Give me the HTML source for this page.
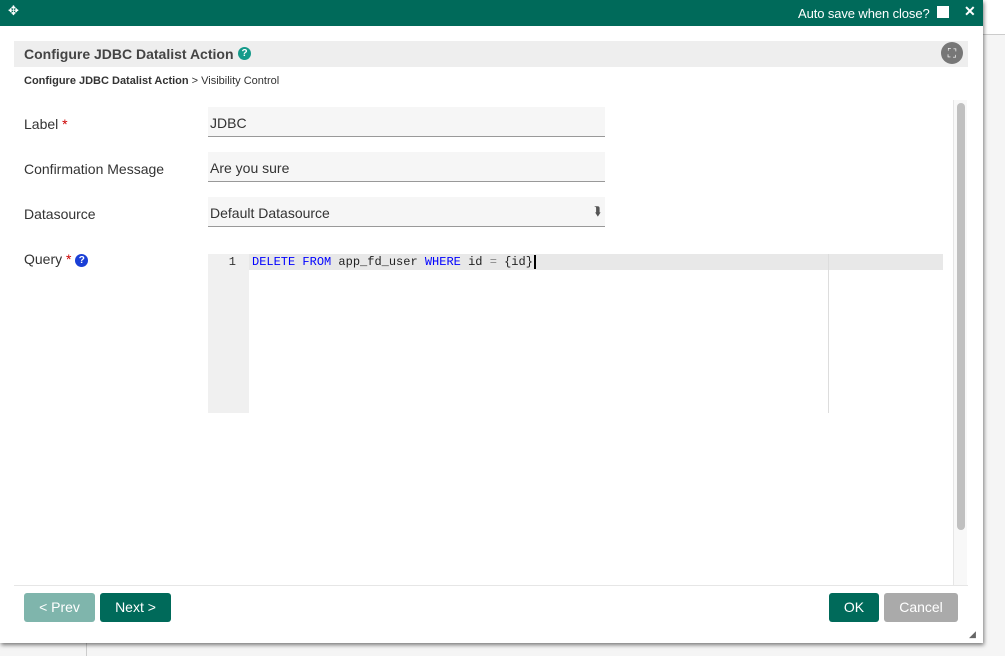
<!DOCTYPE html>
<html><head><style>
*{margin:0;padding:0;box-sizing:border-box}
body{width:1005px;height:656px;background:#f5f5f5;position:relative;overflow:hidden;font-family:"Liberation Sans",sans-serif;}
.abs{position:absolute}
.lbl{position:absolute;left:24px;font-size:14px;color:#333}
.inp{position:absolute;left:208px;width:397px;height:30px;background:#f6f6f6;border-bottom:1px solid #999;font-size:14px;color:#333;padding:8px 2px}
.btn{position:absolute;top:593px;height:29px;border-radius:3px;color:#fff;font-size:14px;text-align:center;line-height:29px}
</style></head><body>
<div class="abs" style="left:983px;top:0;width:22px;height:35px;background:#fff;border-bottom:1px solid #ccc"></div>
<div class="abs" style="left:86px;top:604px;width:1px;height:52px;background:#ccc"></div>
<div class="abs" style="left:0;top:0;width:983px;height:643px;background:#fff;box-shadow:1px 2px 4px rgba(0,0,0,.5)"></div>
<div class="abs" style="left:0;top:0;width:983px;height:26px;background:#006a5a"></div>
<div class="abs" style="left:8px;top:3px;color:#fff;font-size:13px">✥</div>
<div class="abs" style="left:798px;top:6px;color:#fff;font-size:13px;letter-spacing:-0.1px">Auto save when close?</div>
<div class="abs" style="left:937px;top:6px;width:12px;height:12px;background:#fff"></div>
<div class="abs" style="left:964px;top:3px;color:#fff;font-size:14px;font-weight:bold">✕</div>
<div class="abs" style="left:14px;top:41px;width:954px;height:26px;background:#eee"></div>
<div class="abs" style="left:24px;top:46px;font-size:14px;font-weight:bold;color:#444">Configure JDBC Datalist Action</div>
<div class="abs" style="left:238px;top:47px;width:13px;height:13px;border-radius:50%;background:#159a8a;color:#fff;font-size:10px;font-weight:bold;text-align:center;line-height:13px">?</div>
<div class="abs" style="left:941px;top:42px;width:22px;height:22px;border-radius:50%;background:#777;color:#fff;font-size:12px;text-align:center;line-height:22px">⛶</div>
<div class="abs" style="left:24px;top:75px;font-size:11px;color:#333"><b>Configure JDBC Datalist Action</b> &gt; Visibility Control</div>
<div class="lbl" style="top:116px">Label <span style="color:#c00">*</span></div>
<div class="lbl" style="top:161px">Confirmation Message</div>
<div class="lbl" style="top:206px">Datasource</div>
<div class="lbl" style="top:251px">Query <span style="color:#c00">*</span> <span style="display:inline-block;width:13px;height:13px;border-radius:50%;background:#1a3fd6;color:#fff;font-size:10px;font-weight:bold;text-align:center;line-height:13px;vertical-align:1px">?</span></div>
<div class="inp" style="top:107px">JDBC</div>
<div class="inp" style="top:152px">Are you sure</div>
<div class="inp" style="top:197px">Default Datasource<span style="position:absolute;right:4px;top:7px;font-size:12px;color:#555">⮯</span></div>
<div class="abs" style="left:208px;top:254px;width:41px;height:159px;background:#f0f0f0"></div>
<div class="abs" style="left:249px;top:254px;width:694px;height:16px;background:#e8e8e8"></div>
<div class="abs" style="left:828px;top:254px;width:1px;height:159px;background:#ddd"></div>
<div class="abs" style="left:208px;top:254px;width:28px;height:16px;font:12px/16px 'Liberation Mono',monospace;color:#333;text-align:right">1</div>
<div class="abs" style="left:252px;top:254px;font:12px/16px 'Liberation Mono',monospace;color:#222;white-space:pre"><span style="color:#00f">DELETE</span> <span style="color:#00f">FROM</span> app_fd_user <span style="color:#00f">WHERE</span> id <span style="color:#888">=</span> {id}<span style="border-left:2px solid #000;margin-left:1px"></span></div>
<div class="abs" style="left:953px;top:100px;width:14px;height:486px;background:#f8f8f8;border-left:1px solid #e6e6e6"></div>
<div class="abs" style="left:957px;top:103px;width:8px;height:427px;background:#c0c0c0;border-radius:4px"></div>
<div class="abs" style="left:14px;top:585px;width:954px;height:1px;background:#e6e6e6"></div>
<div class="btn" style="left:24px;width:71px;background:#7fb5ac">&lt; Prev</div>
<div class="btn" style="left:100px;width:71px;background:#006a5a">Next &gt;</div>
<div class="btn" style="left:829px;width:50px;background:#006a5a">OK</div>
<div class="btn" style="left:884px;width:74px;background:#aaa">Cancel</div>
<div class="abs" style="left:969px;top:629px;font-size:9px;color:#666">◢</div>
</body></html>
